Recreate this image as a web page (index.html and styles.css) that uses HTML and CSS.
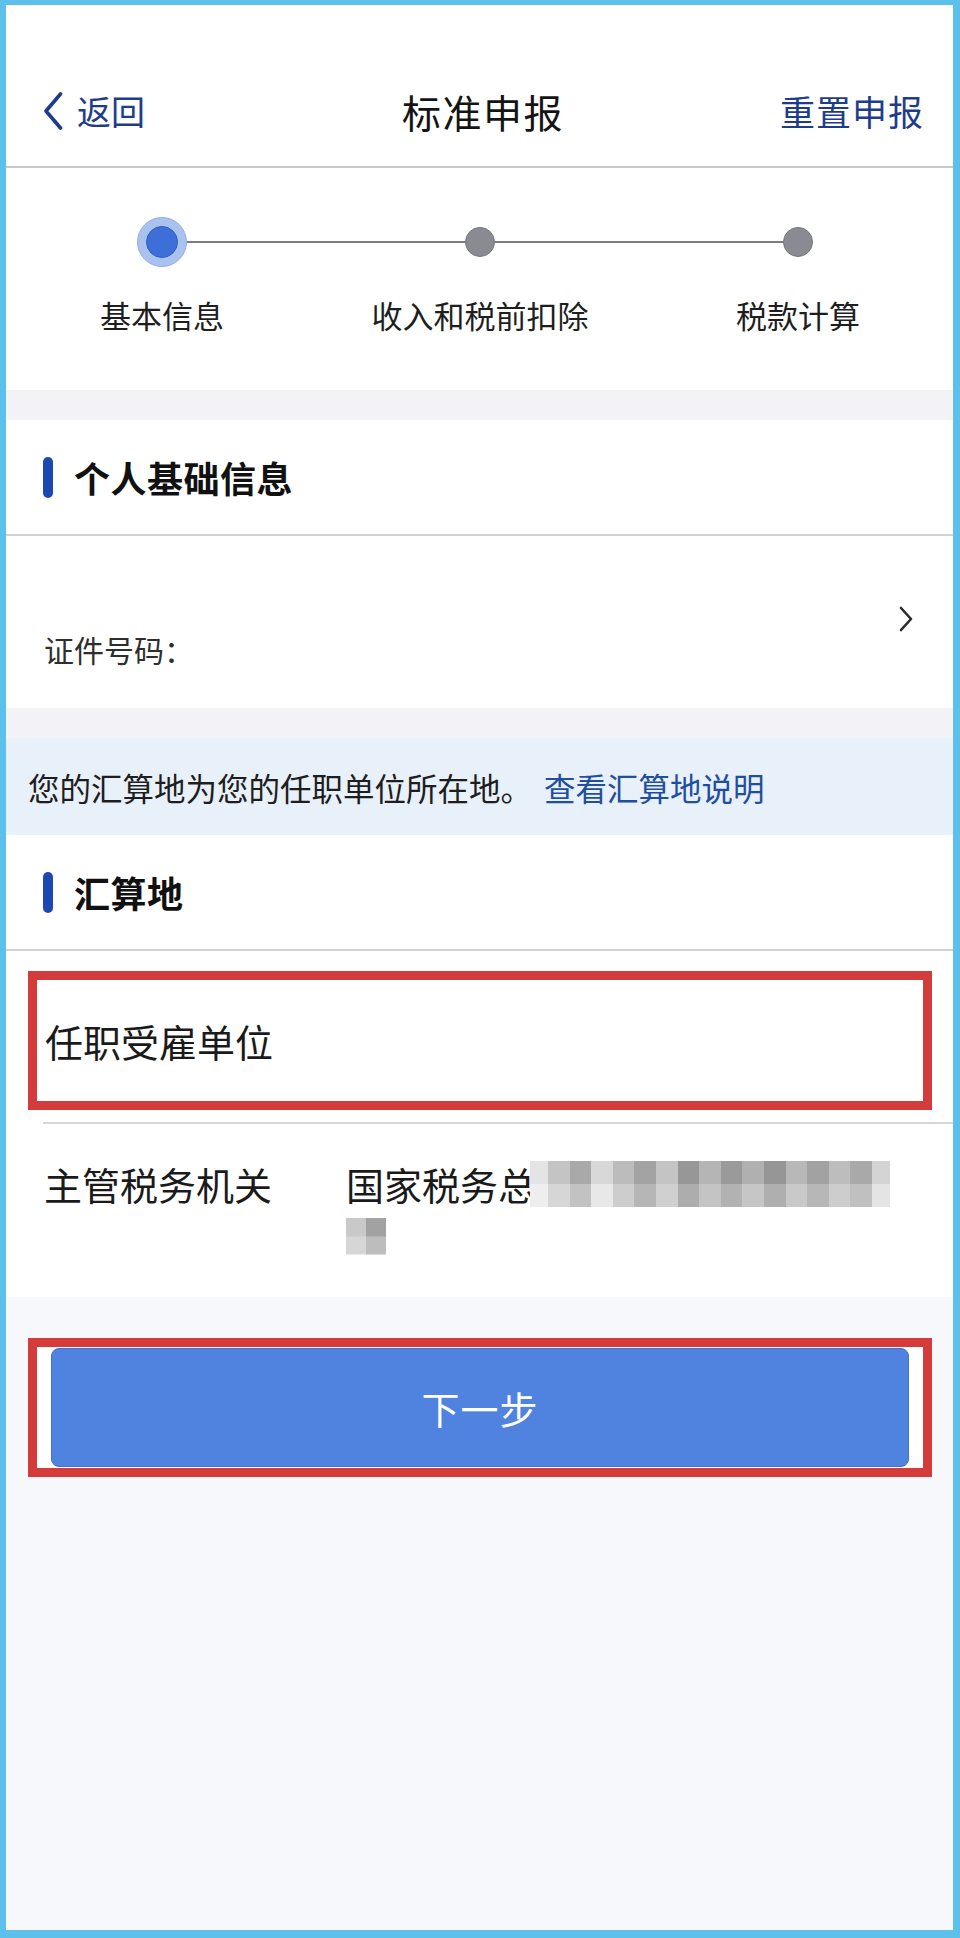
FILE: index.html
```html
<!DOCTYPE html>
<html lang="zh-CN">
<head>
<meta charset="utf-8">
<title>标准申报</title>
<link rel="stylesheet" href="styles.css">
</head>
<body>
<div class="frame">
  <header class="topbar">
    <div class="back">
      <svg class="back-icon" viewBox="0 0 22 38" width="22" height="38" aria-hidden="true"><path d="M18.5 2 L4 19 L18.5 36" fill="none" stroke="#1f3c8c" stroke-width="3.6" stroke-linecap="round" stroke-linejoin="round"/></svg>
      <span>返回</span>
    </div>
    <div class="title">标准申报</div>
    <div class="reset">重置申报</div>
  </header>

  <section class="steps">
    <div class="step">
      <div class="dot-wrap"><span class="dot dot-active"><span class="dot-core"></span></span></div>
      <div class="step-label">基本信息</div>
    </div>
    <div class="step">
      <div class="dot-wrap"><span class="dot dot-idle"></span></div>
      <div class="step-label">收入和税前扣除</div>
    </div>
    <div class="step">
      <div class="dot-wrap"><span class="dot dot-idle"></span></div>
      <div class="step-label">税款计算</div>
    </div>
  </section>

  <div class="band"></div>

  <section class="card">
    <div class="sec-head"><span class="sec-bar"></span><span class="sec-title">个人基础信息</span></div>
    <div class="person-row">
      <div class="person-info">
        <div class="person-name"></div>
        <div class="person-id">证件号码：</div>
      </div>
      <svg class="chev" viewBox="0 0 16 26" width="16" height="26" aria-hidden="true"><path d="M3 2 L13 13 L3 24" fill="none" stroke="#2b2b2b" stroke-width="2.6" stroke-linecap="round" stroke-linejoin="round"/></svg>
    </div>
  </section>

  <div class="band"></div>

  <div class="notice">您的汇算地为您的任职单位所在地。<span class="notice-link">查看汇算地说明</span></div>

  <section class="card">
    <div class="sec-head"><span class="sec-bar"></span><span class="sec-title">汇算地</span></div>
    <div class="employer-row">
      <div class="mark-box employer-box">任职受雇单位</div>
    </div>
    <div class="office-row">
      <div class="office-label">主管税务机关</div>
      <div class="office-value">
        <div class="office-line">国家税务总<span class="mosaic mosaic-a"></span></div>
        <div class="office-line"><span class="mosaic mosaic-b"></span></div>
      </div>
    </div>
  </section>

  <div class="actions">
    <div class="mark-box action-box">
      <div class="next-btn">下一步</div>
    </div>
  </div>
</div>
</body>
</html>
```

FILE: styles.css
```css
* { box-sizing: border-box; }

html, body {
  margin: 0;
  padding: 0;
}

body {
  font-family: "Noto Sans CJK SC", "Noto Sans", sans-serif;
  color: #1a1a1a;
  background: #ffffff;
}

.frame {
  width: 960px;
  height: 1938px;
  overflow: hidden;
  border-style: solid;
  border-color: #5cc0ea;
  border-width: 5px 7px 8px 6px;
  background: #f7f8fc;
  display: flex;
  flex-direction: column;
}

/* ---------- top bar ---------- */
.topbar {
  background: #ffffff;
  display: grid;
  grid-template-columns: 1fr auto 1fr;
  align-items: center;
  padding: 80px 29px 29px 36px;
  border-bottom: 2px solid #c8c8cb;
}

.back {
  display: flex;
  align-items: center;
  gap: 13px;
  color: #1f3c8c;
  font-size: 34px;
  line-height: 52px;
}

.back-icon { display: block; }

.title {
  font-size: 39px;
  line-height: 52px;
  color: #141414;
  letter-spacing: 1.5px;
}

.reset {
  justify-self: end;
  font-size: 35px;
  line-height: 52px;
  color: #1f3c8c;
  letter-spacing: 1px;
}

/* ---------- steps ---------- */
.steps {
  background: #ffffff;
  display: grid;
  grid-template-columns: repeat(3, 318px);
  margin-left: -3px;
  padding: 49px 0 57px;
}

.step {
  display: flex;
  flex-direction: column;
  align-items: center;
}

.dot-wrap {
  position: relative;
  width: 100%;
  height: 50px;
  display: flex;
  justify-content: center;
  align-items: center;
}

.step:not(:first-child) .dot-wrap::before,
.step:not(:last-child) .dot-wrap::after {
  content: "";
  position: absolute;
  top: 24px;
  height: 2px;
  background: #7b7b82;
}

.step:not(:first-child) .dot-wrap::before { left: 0; right: 50%; }
.step:not(:last-child) .dot-wrap::after { left: 50%; right: 0; }

.dot {
  position: relative;
  z-index: 1;
  border-radius: 50%;
  display: flex;
  justify-content: center;
  align-items: center;
}

.dot-active {
  width: 50px;
  height: 50px;
  background: #a9c3ee;
  border: 1px solid #93b1e6;
}

.dot-core {
  width: 32px;
  height: 32px;
  border-radius: 50%;
  background: #3e6fd8;
  border: 1px solid #2d5bc2;
}

.dot-idle {
  width: 30px;
  height: 30px;
  background: #8a8a93;
  border: 1px solid #75757d;
}

.step-label {
  margin-top: 30px;
  font-size: 31px;
  line-height: 36px;
  color: #1e1e1e;
}

/* ---------- bands and cards ---------- */
.band {
  height: 30px;
  background: #f3f3f7;
}

.card {
  background: #ffffff;
}

.sec-head {
  height: 116px;
  display: flex;
  align-items: center;
  padding-left: 37px;
  border-bottom: 2px solid #d2d2d6;
}

.sec-bar {
  width: 10px;
  height: 41px;
  border-radius: 5px;
  background: #1d48b2;
  margin-right: 21px;
}

.sec-title {
  font-size: 36px;
  font-weight: 700;
  line-height: 44px;
  color: #111111;
  letter-spacing: 0.5px;
}

.person-row {
  height: 172px;
  display: flex;
  justify-content: space-between;
  align-items: center;
  padding: 0 39px 0 38px;
}

.person-info {
  display: flex;
  flex-direction: column;
  gap: 24px;
  padding-top: 0;
  margin-top: -10px;
}

.person-name { height: 40px; }

.person-id {
  font-size: 30px;
  line-height: 36px;
  color: #2e2e2e;
}

.chev { display: block; margin-top: -6px; }

/* ---------- notice ---------- */
.notice {
  height: 97px;
  display: flex;
  align-items: center;
  padding-left: 22px;
  background: #e8f0fa;
  font-size: 31.5px;
  color: #1e1e1e;
  white-space: nowrap;
}

.notice-link {
  color: #1f4f9e;
  margin-left: 12px;
}

/* ---------- settlement section ---------- */
.mark-box {
  border: 9px solid #d43b3b;
}

.employer-row {
  padding: 20px 21px 12px 22px;
}

.employer-box {
  height: 139px;
  display: flex;
  align-items: center;
  padding-left: 8px;
  font-size: 38px;
  line-height: 52px;
  color: #1a1a1a;
}

.office-row {
  margin-left: 37px;
  border-top: 2px solid #d6d6d9;
  padding: 34px 0 35px 1px;
  display: grid;
  grid-template-columns: 302px 1fr;
  font-size: 38px;
  line-height: 52px;
  color: #1a1a1a;
}

.office-line {
  height: 52px;
  display: flex;
  align-items: center;
}

.mosaic {
  display: inline-block;
  background-repeat: no-repeat;
}

.mosaic-a {
  width: 360px;
  height: 46px;
  margin-left: -6px;
  background-image:
    linear-gradient(90deg, #e4e4e4 0 5%, #c4c4c4 5% 11%, #a9a9a9 11% 17%, #d8d8d8 17% 23%, #bcbcbc 23% 29%, #a3a3a3 29% 35%, #c4c4c4 35% 41%, #979797 41% 47%, #b5b5b5 47% 53%, #9a9a9a 53% 59%, #b0b0b0 59% 65%, #969696 65% 71%, #b8b8b8 71% 77%, #a2a2a2 77% 83%, #bdbdbd 83% 89%, #a9a9a9 89% 95%, #d4d4d4 95% 100%),
    linear-gradient(90deg, #eeeeee 0 5%, #d6d6d6 5% 11%, #c2c2c2 11% 17%, #e8e8e8 17% 23%, #cdcdcd 23% 29%, #b6b6b6 29% 35%, #d0d0d0 35% 41%, #adadad 41% 47%, #c4c4c4 47% 53%, #b2b2b2 53% 59%, #c6c6c6 59% 65%, #afafaf 65% 71%, #c9c9c9 71% 77%, #b7b7b7 77% 83%, #cdcdcd 83% 89%, #c0c0c0 89% 95%, #e4e4e4 95% 100%);
  background-size: 100% 50%, 100% 50%;
  background-position: top left, bottom left;
}

.mosaic-b {
  width: 40px;
  height: 37px;
  background-image:
    linear-gradient(90deg, #c9c9c9 0 50%, #a2a2a2 50% 100%),
    linear-gradient(90deg, #d6d6d6 0 50%, #bdbdbd 50% 100%);
  background-size: 100% 50%, 100% 50%;
  background-position: top left, bottom left;
}

/* ---------- actions ---------- */
.actions {
  padding: 41px 21px 0 22px;
}

.action-box {
  background: #ffffff;
  padding: 1px 14px 1px 14px;
}

.next-btn {
  height: 119px;
  border-radius: 8px;
  background: #5083df;
  border: 1px solid #4272cf;
  display: flex;
  justify-content: center;
  align-items: center;
  font-size: 38px;
  color: #ffffff;
  letter-spacing: 1px;
}
```
